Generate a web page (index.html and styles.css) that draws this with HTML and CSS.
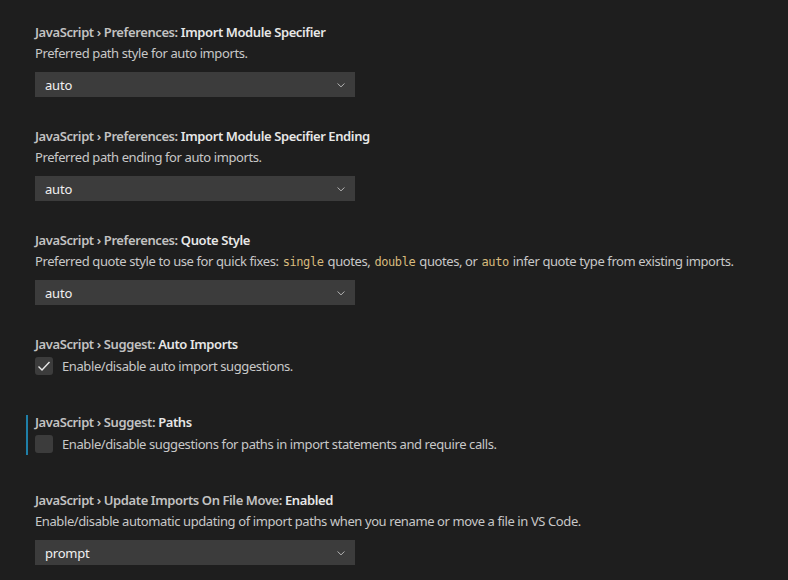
FILE: index.html
```html
<!DOCTYPE html>
<html lang="en">

<head>
    <meta charset="UTF-8">
    <meta name="viewport" content="width=device-width, initial-scale=1.0">
    <title>Settings</title>
    <link rel="stylesheet" href="styles.css">
</head>

<body>
    <div id="settings">
        <div class="item">
            <div class="title"><span class="cat">JavaScript › Preferences: </span><span class="label">Import Module Specifier</span></div>
            <div class="desc">Preferred path style for auto imports.</div>
            <div class="select"><span>auto</span><svg class="chev" width="12" height="12" viewBox="0 0 16 16"><path d="M3.5 6l4.5 4.5L12.5 6" /></svg></div>
        </div>
        <div class="item">
            <div class="title"><span class="cat">JavaScript › Preferences: </span><span class="label">Import Module Specifier Ending</span></div>
            <div class="desc">Preferred path ending for auto imports.</div>
            <div class="select"><span>auto</span><svg class="chev" width="12" height="12" viewBox="0 0 16 16"><path d="M3.5 6l4.5 4.5L12.5 6" /></svg></div>
        </div>
        <div class="item">
            <div class="title"><span class="cat">JavaScript › Preferences: </span><span class="label">Quote Style</span></div>
            <div class="desc">Preferred quote style to use for quick fixes: <code>single</code> quotes, <code>double</code> quotes, or <code>auto</code> infer quote type from existing imports.</div>
            <div class="select"><span>auto</span><svg class="chev" width="12" height="12" viewBox="0 0 16 16"><path d="M3.5 6l4.5 4.5L12.5 6" /></svg></div>
        </div>
        <div class="item check-item">
            <div class="title"><span class="cat">JavaScript › Suggest: </span><span class="label">Auto Imports</span></div>
            <div class="check-row">
                <span class="box"><svg width="16" height="16" viewBox="0 0 16 16"><path d="M2.5 8.5l3.5 3.5 7.5-8" /></svg></span>
                <span class="desc">Enable/disable auto import suggestions.</span>
            </div>
        </div>
        <div class="item check-item focused">
            <div class="title"><span class="cat">JavaScript › Suggest: </span><span class="label">Paths</span></div>
            <div class="check-row">
                <span class="box"></span>
                <span class="desc">Enable/disable suggestions for paths in import statements and require calls.</span>
            </div>
        </div>
        <div class="item">
            <div class="title"><span class="cat">JavaScript › Update Imports On File Move: </span><span class="label">Enabled</span></div>
            <div class="desc">Enable/disable automatic updating of import paths when you rename or move a file in VS Code.</div>
            <div class="select"><span>prompt</span><svg class="chev" width="12" height="12" viewBox="0 0 16 16"><path d="M3.5 6l4.5 4.5L12.5 6" /></svg></div>
        </div>
    </div>
</body>

</html>
```

FILE: styles.css
```css
html, body {
    margin: 0;
    height: 100%;
    overflow: hidden;
    background-color: #1e1e1e;
    color: #cccccc;
    font-family: "Noto Sans", "Open Sans", sans-serif;
    font-size: 13px;
}

#settings {
    padding: 11px 0 0 35px;
}

.item {
    position: relative;
    padding: 12px 0 18px;
}

.check-item {
    padding-bottom: 26px;
}

.title {
    height: 18px;
    line-height: 18px;
    font-weight: 600;
    letter-spacing: -0.4px;
    white-space: nowrap;
}

.cat {
    color: #c2c2c2;
}

.label {
    color: #e7e7e7;
}

.desc {
    margin-top: 3px;
    line-height: 18px;
    letter-spacing: -0.4px;
    color: #c8c8c8;
    white-space: nowrap;
}

code {
    font-family: "DejaVu Sans Mono", "Liberation Mono", monospace;
    font-size: 12px;
    line-height: 1;
    letter-spacing: -0.4px;
    margin: 0 1px;
    color: #d7ba7d;
}

.select {
    margin-top: 10px;
    width: 320px;
    height: 25px;
    box-sizing: border-box;
    padding: 0 8px 0 10px;
    background-color: #3c3c3c;
    color: #f0f0f0;
    display: flex;
    align-items: center;
    justify-content: space-between;
}

.select span {
    letter-spacing: -0.2px;
}

.chev path {
    fill: none;
    stroke: #c5c5c5;
    stroke-width: 1.2;
}

.check-row {
    margin-top: 4px;
    display: flex;
    align-items: center;
    gap: 9px;
}

.check-row .desc {
    margin-top: 0;
}

.box {
    width: 18px;
    height: 18px;
    border-radius: 3px;
    background-color: #3c3c3c;
    display: flex;
    align-items: center;
    justify-content: center;
}

.box path {
    fill: none;
    stroke: #e8e8e8;
    stroke-width: 1.4;
}

.focused::before {
    content: "";
    position: absolute;
    left: -9px;
    top: 14px;
    width: 2px;
    height: 40px;
    background-color: #1f7fa8;
}
```
